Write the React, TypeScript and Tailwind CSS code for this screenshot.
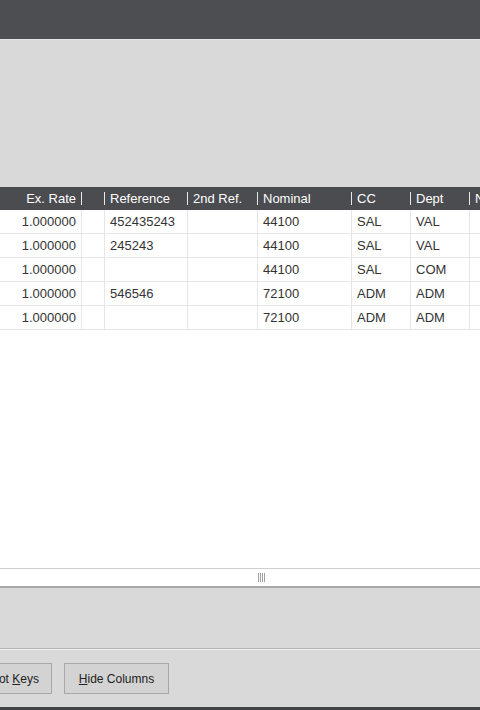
import React from 'react';

type Col = { key: string; label: string; width: string; align?: 'right' };

const columns: Col[] = [
  { key: 'rate', label: 'Ex. Rate', width: 'w-[81px]', align: 'right' },
  { key: 'blank', label: '', width: 'w-[23px]' },
  { key: 'ref', label: 'Reference', width: 'w-[83px]' },
  { key: 'ref2', label: '2nd Ref.', width: 'w-[70px]' },
  { key: 'nominal', label: 'Nominal', width: 'w-[94px]' },
  { key: 'cc', label: 'CC', width: 'w-[59px]' },
  { key: 'dept', label: 'Dept', width: 'w-[59px]' },
  { key: 'next', label: 'N', width: 'w-[60px]' },
];

const rows: Record<string, string>[] = [
  { rate: '1.000000', ref: '452435243', nominal: '44100', cc: 'SAL', dept: 'VAL' },
  { rate: '1.000000', ref: '245243', nominal: '44100', cc: 'SAL', dept: 'VAL' },
  { rate: '1.000000', ref: '', nominal: '44100', cc: 'SAL', dept: 'COM' },
  { rate: '1.000000', ref: '546546', nominal: '72100', cc: 'ADM', dept: 'ADM' },
  { rate: '1.000000', ref: '', nominal: '72100', cc: 'ADM', dept: 'ADM' },
];

const App: React.FC = () => {
  return (
    <div
      className="w-[480px] h-[710px] overflow-hidden flex flex-col bg-[#d9d9d9] text-[13px] text-[#333333]"
      style={{ fontFamily: '"Liberation Sans", Arial, sans-serif' }}
    >
      <div className="h-[40px] shrink-0 bg-[#4d4e52] border-b border-[#e4e4e4]" />
      <div className="h-[147px] shrink-0 bg-[#d9d9d9]" />

      {/* grid */}
      <div className="flex-1 flex flex-col bg-white overflow-hidden border-b border-[#cfcfcf]">
        <div className="h-[23px] shrink-0 flex bg-[#4b4c50] text-white">
          {columns.map((c, i) => (
            <div key={c.key} className={`${c.width} shrink-0 flex items-center h-full`}>
              {i > 0 && <div className="w-px h-[13px] bg-[#e8e8e8]" />}
              <span
                className={`flex-1 whitespace-nowrap overflow-hidden ${c.align === 'right' ? 'text-right pr-[5px]' : 'pl-[5px]'}`}
              >
                {c.label}
              </span>
            </div>
          ))}
        </div>
        {rows.map((r, ri) => (
          <div key={ri} className="h-[24px] shrink-0 flex border-b border-[#e6e6e6]">
            {columns.map((c, i) => (
              <div
                key={c.key}
                className={`${c.width} shrink-0 flex items-center h-full pt-px ${i > 0 ? 'border-l border-[#e6e6e6]' : ''}`}
              >
                <span
                  className={`flex-1 whitespace-nowrap ${c.align === 'right' ? 'text-right pr-[5px]' : 'pl-[5px]'}`}
                >
                  {r[c.key] ?? ''}
                </span>
              </div>
            ))}
          </div>
        ))}
      </div>

      {/* splitter */}
      <div className="h-[19px] shrink-0 bg-white flex items-center justify-center border-b-2 border-[#a9a9a9]">
        <div className="flex gap-[1px] h-[9px] ml-[42px]">
          <div className="w-px bg-[#a0a0a0]" />
          <div className="w-px bg-[#a0a0a0]" />
          <div className="w-px bg-[#a0a0a0]" />
          <div className="w-px bg-[#a0a0a0]" />
        </div>
      </div>

      <div className="h-[61px] shrink-0 bg-[#d9d9d9] border-b border-[#b3b3b3]" />

      <div className="h-[58px] shrink-0 bg-[#d9d9d9] border-t border-[#f0f0f0] flex items-start pt-[13px] gap-[12px] text-[12px] text-[#222222]">
        <button className="-ml-[22px] w-[74px] h-[31px] shrink-0 bg-[#d3d3d3] border border-[#a7a7a7] text-right pr-[12px]">
          Hot <span className="underline">K</span>eys
        </button>
        <button className="w-[105px] h-[31px] shrink-0 bg-[#d3d3d3] border border-[#a7a7a7]">
          <span className="underline">H</span>ide Columns
        </button>
      </div>

      <div className="h-[3px] shrink-0 bg-[#414246]" />
    </div>
  );
};

export default App;
